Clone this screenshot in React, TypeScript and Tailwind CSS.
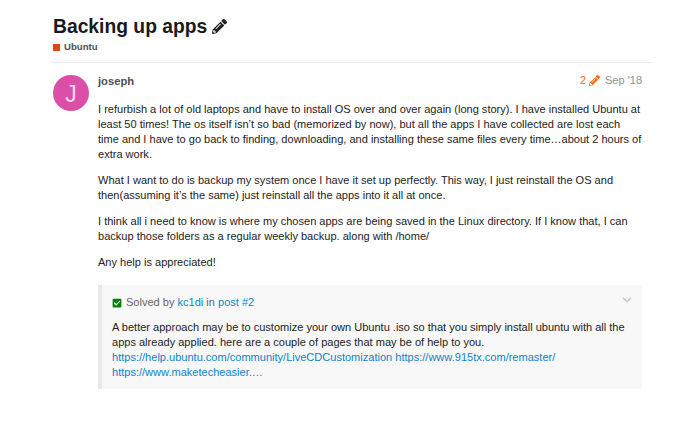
import { FaPencilAlt, FaCheckSquare, FaChevronDown } from "react-icons/fa";

export default function App() {
  return (
    <div className="w-[690px] h-[423px] overflow-hidden bg-white pl-[53px] pr-[39px] pt-[13px] font-['Liberation_Sans',Arial,sans-serif] text-[#222222]">
      <h1 className="flex items-center gap-[5px] text-[19.3px] leading-[27px] font-bold text-[#1a1a1a]">
        Backing up apps
        <FaPencilAlt className="w-[15px] h-[15px] text-[#222222]" />
      </h1>
      <div className="flex items-center gap-[4px] h-[14px] text-[9.6px] font-bold text-[#4f4f4f]">
        <span className="w-[7px] h-[7px] bg-[#dd4814]" />
        <span>Ubuntu</span>
      </div>
      <div className="h-[1px] bg-[#e9e9e9] mt-[8px]" />
      <div className="flex mt-[12px]">
        <div className="w-[36px] h-[36px] shrink-0 rounded-full bg-[#dc4fa8] flex items-center justify-center pt-[2px] text-[#f9dcef] text-[23px] leading-none">
          J
        </div>
        <div className="ml-[9px] flex-1 min-w-0">
          <div className="flex items-center justify-between h-[12px] pr-[9px]">
            <span className="font-bold text-[#4f4f4f] text-[11.2px]">joseph</span>
            <span className="flex items-center text-[#919191] text-[11px] -mt-[2px]">
              <span className="text-[#fa6c17]">2</span>
              <FaPencilAlt className="w-[11px] h-[11px] text-[#fa6c17] ml-[3px] mr-[5px]" />
              Sep '18
            </span>
          </div>
          <div className="w-[545px] pt-[15px] text-[11.04px] leading-[15px]">
            <p>I refurbish a lot of old laptops and have to install OS over and over again (long story). I have installed Ubuntu at least 50 times! The os itself isn’t so bad (memorized by now), but all the apps I have collected are lost each time and I have to go back to finding, downloading, and installing these same files every time…about 2 hours of extra work.</p>
            <p className="mt-[11px]">What I want to do is backup my system once I have it set up perfectly. This way, I just reinstall the OS and then(assuming it’s the same) just reinstall all the apps into it all at once.</p>
            <p className="mt-[11px]">I think all i need to know is where my chosen apps are being saved in the Linux directory. If I know that, I can backup those folders as a regular weekly backup. along with /home/</p>
            <p className="mt-[11px]">Any help is appreciated!</p>
          </div>
          <div className="mt-[15px] mr-[9px] h-[104px] bg-[#f8f8f8] border-l-[4px] border-[#e9e9e9] pl-[10px] pr-[9px] pt-[10px] text-[11.04px] leading-[15px]">
            <div className="flex items-center justify-between h-[15px] text-[#646464]">
              <span className="flex items-center">
                <FaCheckSquare className="w-[10px] h-[10px] text-[#008000] mr-[4px]" />
                Solved by&nbsp;<span className="text-[#0a84cc]">kc1di</span>&nbsp;in&nbsp;<span className="text-[#0a84cc]">post #2</span>
              </span>
              <FaChevronDown className="w-[10px] h-[10px] text-[#c8c8c8] mr-[1px] -mt-[5px]" />
            </div>
            <p className="mt-[10px] text-[#222222]">
              A better approach may be to customize your own Ubuntu .iso so that you simply install ubuntu with all the apps already applied. here are a couple of pages that may be of help to you.{" "}
              <span className="text-[#0a84cc]">https://help.ubuntu.com/community/LiveCDCustomization</span>{" "}
              <span className="text-[#0a84cc]">https://www.915tx.com/remaster/</span>{" "}
              <span className="text-[#0a84cc]">https://www.maketecheasier.…</span>
            </p>
          </div>
        </div>
      </div>
    </div>
  );
}
